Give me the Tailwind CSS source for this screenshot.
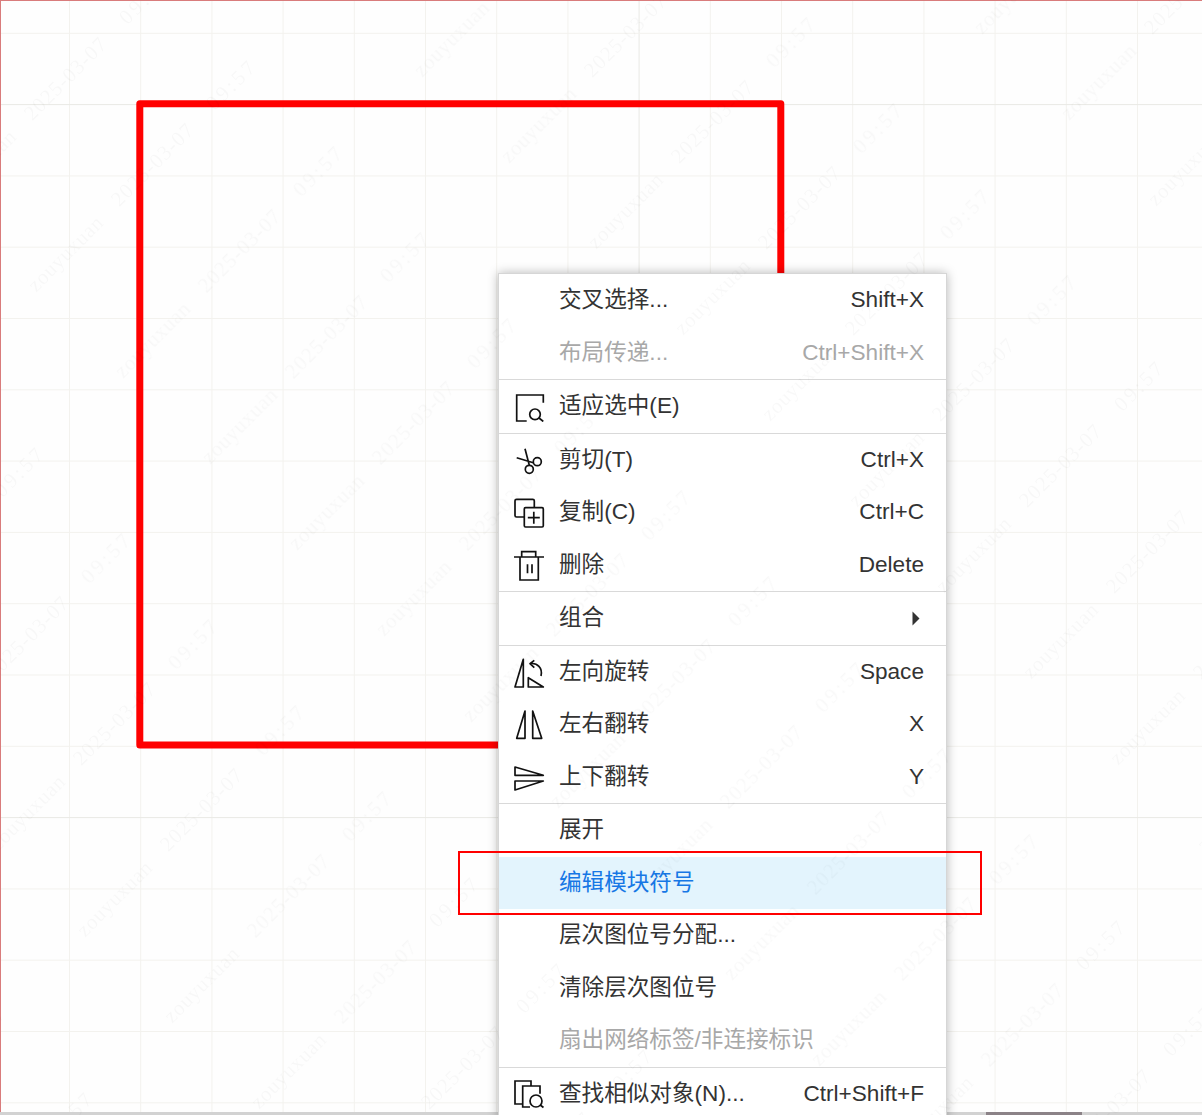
<!DOCTYPE html>
<html lang="en">

<head>
    <meta charset="UTF-8">
    <meta name="viewport" content="width=device-width, initial-scale=1.0">
    <title>Schematic context menu</title>
    <script src="https://cdn.jsdelivr.net/npm/@tailwindcss/browser@4"></script>
</head>

<body class="bg-[#fefefe]">
    <div class="relative w-[1202px] h-[1115px] overflow-hidden bg-[#fefefe] font-['Liberation_Sans','Noto_Sans_CJK_SC',sans-serif]">

        <!-- canvas: grid + the red symbol outline -->
        <svg id="grid" class="absolute inset-0" width="1202" height="1112"></svg>
        <svg class="absolute inset-0" width="1202" height="1115" fill="none">
            <rect x="139.8" y="103.7" width="641" height="641.3" stroke="#ff0000" stroke-width="7" stroke-linejoin="round" />
        </svg>
        <div class="absolute top-0 left-0 w-full h-px bg-[#d97c7c]"></div>
        <div class="absolute top-0 left-0 h-full w-px bg-[#d97c7c]"></div>

        <!-- horizontal scrollbar -->
        <div class="absolute bottom-0 left-0 w-full h-[3px] bg-[#d2d2d2]">
            <div class="absolute left-[986px] w-[96px] h-full bg-[#8b8287]"></div>
        </div>

        <!-- context menu -->
        <div class="absolute left-[498px] top-[273px] w-[449px] bg-white border border-[#d6d6d6] shadow-[0_0_10px_rgba(0,0,0,0.28)] text-[22.6px] text-[#333333]">
            <div class="flex items-center justify-between h-[52.5px] pl-[60px] pr-[22px]"><span>交叉选择...</span><span>Shift+X</span></div>
            <div class="flex items-center justify-between h-[52.5px] pl-[60px] pr-[22px] text-[#a8a8a8]"><span>布局传递...</span><span>Ctrl+Shift+X</span></div>
            <div class="h-px bg-[#d9d9d9]"></div>

            <div class="flex items-center h-[52.5px] pr-[22px]">
                <svg class="ml-[14px] mr-[14px] shrink-0" width="32" height="32" viewBox="0 0 32 32" fill="none" stroke="#111" stroke-width="1.7">
                    <path d="M13.7 31H3.7V5H30.3V12.7" />
                    <circle cx="22" cy="24.3" r="5.3" />
                    <path d="M26 28L30.3 31.5" />
                </svg>
                <span>适应选中(E)</span>
            </div>
            <div class="h-px bg-[#d9d9d9]"></div>

            <div class="flex items-center h-[52.5px] pr-[22px]">
                <svg class="ml-[14px] mr-[14px] shrink-0" width="32" height="32" viewBox="0 0 32 32" fill="none" stroke="#111" stroke-width="1.7">
                    <path d="M12 4.7L16.3 21.3M3.7 13.7L20.3 18.7" />
                    <circle cx="24.3" cy="17.7" r="4" />
                    <circle cx="16.3" cy="25.3" r="4" />
                </svg>
                <span class="flex-1">剪切(T)</span><span>Ctrl+X</span>
            </div>
            <div class="flex items-center h-[52.5px] pr-[22px]">
                <svg class="ml-[14px] mr-[14px] shrink-0" width="32" height="32" viewBox="0 0 32 32" fill="none" stroke="#111" stroke-width="1.7">
                    <path d="M11.3 21H3.5Q2 21 2 19.5V4.8Q2 3.3 3.5 3.3H19.8Q21.3 3.3 21.3 4.8V11.7" />
                    <rect x="11.3" y="11.7" width="19" height="19.3" rx="1.2" />
                    <path d="M20.8 15.7V27.7M14.8 21.7H26.8" />
                </svg>
                <span class="flex-1">复制(C)</span><span>Ctrl+C</span>
            </div>
            <div class="flex items-center h-[52.5px] pr-[22px]">
                <svg class="ml-[14px] mr-[14px] shrink-0" width="32" height="32" viewBox="0 0 32 32" fill="none" stroke="#111" stroke-width="1.7">
                    <path d="M1 8H31M8.7 8V2.7H22.7V8M7 8V31H25.3V8M14.5 15.3V24.3M19 15.3V24.3" />
                </svg>
                <span class="flex-1">删除</span><span>Delete</span>
            </div>
            <div class="h-px bg-[#d9d9d9]"></div>

            <div class="flex items-center justify-between h-[52.5px] pl-[60px] pr-[26px]">
                <span>组合</span>
                <svg width="8" height="15" viewBox="0 0 8 15"><path d="M0.5 0.5L7.5 7.5L0.5 14.5Z" fill="#333333" /></svg>
            </div>
            <div class="h-px bg-[#d9d9d9]"></div>

            <div class="flex items-center h-[52.5px] pr-[22px]">
                <svg class="ml-[14px] mr-[14px] shrink-0" width="32" height="32" viewBox="0 0 32 32" fill="none" stroke="#111" stroke-width="1.7" stroke-linejoin="round">
                    <path d="M10.3 3.3V31H2ZM15.3 21.7V31H30.3Z" />
                    <path d="M17.5 7.7C24 6.5 30 12 28 20M21.3 4.3L17 7.7L21.3 11.7" />
                </svg>
                <span class="flex-1">左向旋转</span><span>Space</span>
            </div>
            <div class="flex items-center h-[52.5px] pr-[22px]">
                <svg class="ml-[14px] mr-[14px] shrink-0" width="32" height="32" viewBox="0 0 32 32" fill="none" stroke="#111" stroke-width="1.7" stroke-linejoin="round">
                    <path d="M12 3V30.3H3.7ZM19.7 3V30.3H28.7Z" />
                </svg>
                <span class="flex-1">左右翻转</span><span>X</span>
            </div>
            <div class="flex items-center h-[52.5px] pr-[22px]">
                <svg class="ml-[14px] mr-[14px] shrink-0" width="32" height="32" viewBox="0 0 32 32" fill="none" stroke="#111" stroke-width="1.7" stroke-linejoin="round">
                    <path d="M2 6L30.3 14.3H2ZM2 20H30.3L2 29Z" />
                </svg>
                <span class="flex-1">上下翻转</span><span>Y</span>
            </div>
            <div class="h-px bg-[#d9d9d9]"></div>

            <div class="flex items-center h-[52.5px] pl-[60px]">展开</div>
            <div class="flex items-center h-[52.5px] pl-[60px] bg-[#e3f4fd] text-[#1677e5]">编辑模块符号</div>
            <div class="flex items-center h-[52.5px] pl-[60px]">层次图位号分配...</div>
            <div class="flex items-center h-[52.5px] pl-[60px]">清除层次图位号</div>
            <div class="flex items-center h-[52.5px] pl-[60px] text-[#a8a8a8]">扇出网络标签/非连接标识</div>
            <div class="h-px bg-[#d9d9d9]"></div>

            <div class="flex items-center h-[52.5px] pr-[22px]">
                <svg class="ml-[14px] mr-[14px] shrink-0" width="32" height="32" viewBox="0 0 32 32" fill="none" stroke="#111" stroke-width="1.7">
                    <path d="M9.7 26H2V3H18V8" />
                    <path d="M17 29H9.7V8H27V15.7" />
                    <circle cx="23" cy="23" r="6" />
                    <path d="M27.2 27L30.5 29.5" />
                </svg>
                <span class="flex-1">查找相似对象(N)...</span><span>Ctrl+Shift+F</span>
            </div>
        </div>

        <!-- annotation frame drawn over the screenshot -->
        <div class="absolute left-[458px] top-[851px] w-[524px] h-[64px] border-2 border-[#ff0000]"></div>

        <!-- watermark sits above everything -->
        <svg id="watermark" class="absolute inset-0 pointer-events-none blur-[0.6px]" width="1202" height="1115"></svg>
    </div>

    <script>
        const svgNS = 'http://www.w3.org/2000/svg';

        const grid = document.getElementById('grid');
        const addLine = (x1, y1, x2, y2, major) => {
            const line = document.createElementNS(svgNS, 'line');
            line.setAttribute('x1', x1);
            line.setAttribute('y1', y1);
            line.setAttribute('x2', x2);
            line.setAttribute('y2', y2);
            line.setAttribute('stroke', major ? '#e9e9e5' : '#f3f2ee');
            grid.appendChild(line);
        };
        for (let n = 0; n < 16; n++) {
            const x = 69.5 + 71.2 * n;
            addLine(x, 0, x, 1112, n === 8);
        }
        for (let n = 0; n < 16; n++) {
            const y = 33.3 + 71.3 * n;
            addLine(0, y, 1202, y, n === 1 || n === 11);
        }

        const watermark = document.getElementById('watermark');
        const stamps = [
            { text: 'zouyuxuan', x: 453, y: 40, spacing: 0.6 },
            { text: '2025-03-07', x: 627, y: 37, spacing: 1 },
            { text: '09:57', x: 793, y: 43, spacing: 3 }
        ];
        stamps.forEach(stamp => {
            for (let m = -3; m <= 3; m++) {
                for (let k = -15; k <= 15; k++) {
                    const x = stamp.x + 560 * m + 87 * k;
                    const y = stamp.y - 43 * m + 86 * k;
                    if (x < -80 || x > 1280 || y < -80 || y > 1195) continue;
                    const label = document.createElementNS(svgNS, 'text');
                    label.textContent = stamp.text;
                    label.setAttribute('x', x);
                    label.setAttribute('y', y);
                    label.setAttribute('text-anchor', 'middle');
                    label.setAttribute('dominant-baseline', 'middle');
                    label.setAttribute('transform', `rotate(-45 ${x} ${y})`);
                    label.setAttribute('font-family', 'Liberation Serif, serif');
                    label.setAttribute('font-size', '21');
                    label.setAttribute('letter-spacing', stamp.spacing);
                    label.setAttribute('fill', 'rgba(0,0,0,0.028)');
                    watermark.appendChild(label);
                }
            }
        });
    </script>
</body>

</html>
